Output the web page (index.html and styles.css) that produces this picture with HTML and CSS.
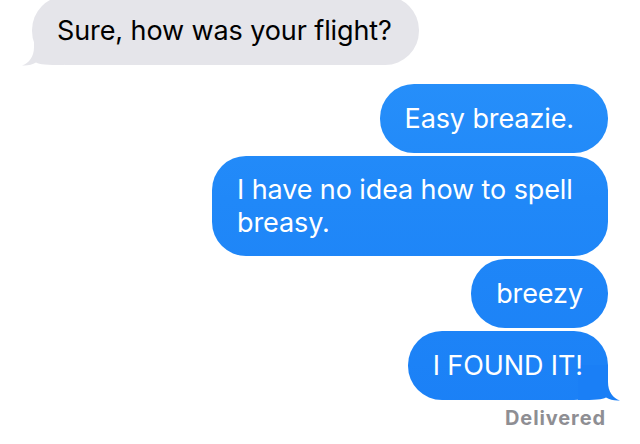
FILE: index.html
```html
<!DOCTYPE html>
<html lang="en">
<head>
<meta charset="utf-8">
<title>Messages</title>
<link rel="stylesheet" href="styles.css">
</head>
<body>
<div class="thread">
  <div class="bubble them">
    Sure, how was your flight?
    <svg class="tail tail-left" width="44" height="36" viewBox="0 0 44 36" aria-hidden="true"><path d="M0 0 L30 0 L30 17 C30 27 35 33 42 35.5 C36 36 32 34.5 28 32.5 C24 34.5 18 35 0 35 Z"/></svg>
  </div>
  <div class="bubble me easy">Easy breazie.</div>
  <div class="bubble me wide">I have no idea how to spell breasy.</div>
  <div class="bubble me">breezy</div>
  <div class="bubble me">
    I FOUND IT!
    <svg class="tail tail-right" width="44" height="36" viewBox="0 0 44 36" aria-hidden="true"><path d="M0 0 L30 0 L30 17 C30 27 35 33 42 35.5 C36 36 32 34.5 28 32.5 C24 34.5 18 35 0 35 Z"/></svg>
  </div>
  <div class="status">Delivered</div>
</div>
</body>
</html>
```

FILE: styles.css
```css
html, body {
  margin: 0;
  padding: 0;
  background: #ffffff;
}

body {
  width: 640px;
  height: 444px;
  overflow: hidden;
  font-family: Inter, "Noto Sans", "Liberation Sans", sans-serif;
}

.thread {
  display: flex;
  flex-direction: column;
  align-items: flex-end;
  gap: 3px;
  padding: 0 32px;
  margin-top: -4px;
}

.bubble {
  position: relative;
  z-index: 0;
  box-sizing: border-box;
  padding: 18px 25px;
  border-radius: 34px;
  font-size: 27px;
  line-height: 33px;
  letter-spacing: -0.1px;
}

.them {
  align-self: flex-start;
  background: #e5e5ea;
  color: #000000;
  margin-bottom: 16px;
  padding-right: 27px;
}

.me {
  color: #ffffff;
  background: linear-gradient(180deg, #2a93fb 0px, #2088f8 200px, #1a7ff6 444px) fixed;
}

.easy {
  padding-right: 34px;
}

.wide {
  width: 396px;
  padding: 17px 30px 17px 25px;
}

.tail {
  position: absolute;
  z-index: -1;
  bottom: -1px;
}

.tail-right {
  right: -14px;
  fill: #1a7ff6;
}

.tail-left {
  left: -12px;
  transform: scaleX(-1);
  fill: #e5e5ea;
}

.status {
  margin-top: 3px;
  margin-right: 2px;
  font-size: 20px;
  line-height: 24px;
  font-weight: 700;
  letter-spacing: 0.9px;
  color: #8e8e93;
}
```
